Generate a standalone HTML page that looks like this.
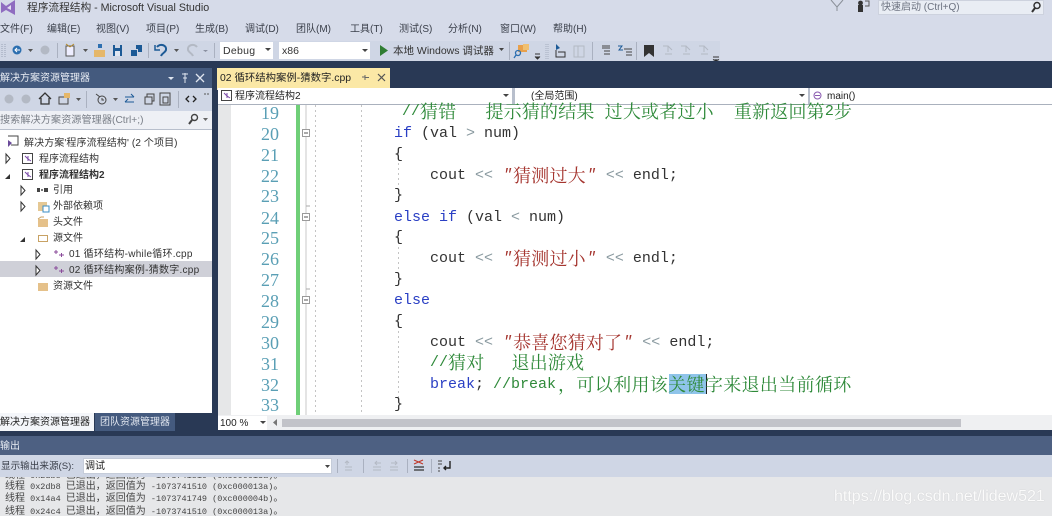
<!DOCTYPE html>
<html><head><meta charset="utf-8">
<style>
html,body{margin:0;padding:0}
body{width:1052px;height:516px;overflow:hidden;position:relative;background:#d6dbe9;font-family:"Liberation Sans","Noto Sans CJK SC",sans-serif;font-size:10px;color:#333;filter:blur(.3px)}
.a{position:absolute;white-space:pre}
.r{position:absolute}
.m{top:23px;line-height:14px;font-size:10px;color:#3a3f4a}
.t{line-height:14px;font-size:10px;color:#333}
.l{position:absolute;left:218px;width:61px;text-align:right;font:18px/20px "Liberation Serif","Liberation Mono",serif;color:#5a9fb5}
.k{position:absolute;white-space:pre;font:15px/20px "Liberation Mono",monospace;color:#333}
.c{font:18px/0 "Noto Serif CJK SC",serif;position:relative;top:3px;letter-spacing:.2px}
.g{color:#2f8a3a}.s{color:#a5352f}.b{color:#2a3fc4}.o{color:#8a9aa0}
.q{margin:0 1px;font-style:italic}
.out{position:absolute;left:5px;white-space:pre;font:8.5px/12px "Liberation Mono",monospace;color:#444}
.out span{font:10px/0 "Noto Sans CJK SC",sans-serif}
svg{position:absolute;overflow:visible}
</style></head><body>

<!-- title -->
<svg style="left:0;top:0" width="18" height="16"><path d="M1 2L6 6L15 0V15L6 10L1 13Z" fill="#8f6cc0"/><path d="M11 5V10L7 8Z" fill="#e3ddf0"/></svg>
<div class="a" style="left:27px;top:1px;font-size:10.7px;line-height:14px;color:#333">程序流程结构 - Microsoft Visual Studio</div>
<svg style="left:830px;top:0" width="16" height="12"><path d="M1 0L7 7V11M13 0L7 7" stroke="#8a8f98" fill="none"/></svg>
<svg style="left:857px;top:0" width="14" height="13"><rect x="1" y="5" width="5" height="7" fill="#333"/><circle cx="3.5" cy="3" r="2.4" fill="#333"/><path d="M8 1H12V6H8" stroke="#555" fill="none"/></svg>
<div class="r" style="left:878px;top:0;width:166px;height:15px;background:#e9edf4;border:1px solid #cdd2de;box-sizing:border-box"></div>
<div class="a" style="left:881px;top:1px;font-size:10px;line-height:14px;color:#6c7280">快速启动 (Ctrl+Q)</div>
<svg style="left:1030px;top:1px" width="12" height="12"><circle cx="7" cy="4.5" r="3" stroke="#333" stroke-width="1.5" fill="none"/><path d="M5 7L2 11" stroke="#333" stroke-width="2"/></svg>

<!-- menu -->
<div class="a m" style="left:0">文件(F)</div><div class="a m" style="left:47px">编辑(E)</div><div class="a m" style="left:96px">视图(V)</div><div class="a m" style="left:146px">项目(P)</div><div class="a m" style="left:195px">生成(B)</div><div class="a m" style="left:245px">调试(D)</div><div class="a m" style="left:296px">团队(M)</div><div class="a m" style="left:350px">工具(T)</div><div class="a m" style="left:399px">测试(S)</div><div class="a m" style="left:448px">分析(N)</div><div class="a m" style="left:500px">窗口(W)</div><div class="a m" style="left:553px">帮助(H)</div>

<!-- toolbar -->
<div class="r" style="left:0;top:41px;width:720px;height:20px;background:#cfd6e5"></div>
<svg style="left:0;top:41px" width="720" height="20">
<path d="M2 3V17M5 3V17" stroke="#9aa3b5" stroke-dasharray="1 1"/>
<circle cx="17" cy="9" r="4.500" fill="#2c6fb0"/><path d="M20 9H15M17 7L15 9L17 11" stroke="#fff" fill="none"/>
<path d="M28 8H33L30.500 11Z" fill="#555"/>
<circle cx="45" cy="9" r="4.500" fill="#b3b9c4"/>
<path d="M57.500 2V17" stroke="#aab1c0"/>
<rect x="66" y="5" width="8" height="10" fill="#eef" stroke="#555"/><path d="M66 3L70 6M74 3L70 6" stroke="#b58a2a"/>
<path d="M83 8H88L85.500 11Z" fill="#555"/>
<rect x="94" y="9" width="11" height="7" fill="#e5b769"/><rect x="98" y="3" width="4" height="4" fill="#2c6fb0"/>
<path d="M113 4H122V15H113Z" fill="#1c5a96"/><rect x="115" y="4" width="5" height="3" fill="#cfd6e5"/><rect x="115" y="10" width="5" height="5" fill="#dfe6f2"/>
<path d="M131 9H137V15H131ZM136 4H142V11H138V8H136Z" fill="#1c5a96"/>
<path d="M148.500 2V17" stroke="#aab1c0"/>
<path d="M157 6C160 2 167 4 166 9C165 12 162 12 161 15" stroke="#1c5a96" stroke-width="2" fill="none"/><path d="M155 4V9H160" stroke="#1c5a96" stroke-width="1.500" fill="none"/>
<path d="M174 8H179L176.500 11Z" fill="#555"/>
<path d="M197 6C194 2 187 4 188 9C189 12 192 12 193 15" stroke="#b3b9c4" stroke-width="2" fill="none"/>
<path d="M203 9H208L205.500 11Z" fill="#8a90a0"/>
<path d="M214.500 2V17" stroke="#aab1c0"/>
</svg>
<div class="r" style="left:220px;top:42px;width:53px;height:17px;background:#fff"></div>
<div class="a" style="left:223px;top:44px;font-size:10.500px;line-height:14px;letter-spacing:.3px">Debug</div>
<svg style="left:265px;top:48px" width="6" height="4"><path d="M0 0H6L3 3Z" fill="#444"/></svg>
<div class="r" style="left:279px;top:42px;width:91px;height:17px;background:#fff"></div>
<div class="a" style="left:282px;top:44px;font-size:10.500px;line-height:14px">x86</div>
<svg style="left:362px;top:49px" width="6" height="4"><path d="M0 0H6L3 3Z" fill="#444"/></svg>
<svg style="left:380px;top:45px" width="8" height="11"><path d="M0 0L8 5.500L0 11Z" fill="#2f7d32"/></svg>
<div class="a" style="left:393px;top:44px;font-size:10.500px;line-height:14px;color:#333">本地 Windows 调试器</div>
<svg style="left:370px;top:41px" width="360" height="20">
<path d="M129 7H134L131.500 10Z" fill="#444"/>
<path d="M139.500 1V19" stroke="#aab1c0"/>
<rect x="148" y="4" width="9" height="7" fill="#e8a04a"/><rect x="153" y="3" width="6" height="6" fill="#f0c070"/><circle cx="148" cy="12" r="2.500" fill="none" stroke="#2c6fb0" stroke-width="1.300"/><path d="M146 14L144 17" stroke="#2c6fb0" stroke-width="1.300"/>
<path d="M165 13H170M165 15.500L167.500 18L170 15.500" stroke="#333" fill="#333"/>
<path d="M176 3V19M178 3V19" stroke="#a5adbe" stroke-dasharray="1 1"/>
<path d="M186 3L190 7L186 9Z" fill="#1c5a96"/><path d="M186 9V16H195V11H188" stroke="#333" fill="none"/>
<path d="M204 5H214V16H204ZM208 5V16" stroke="#b3b9c4" fill="none"/>
<path d="M222.500 1V19" stroke="#aab1c0"/>
<path d="M232 7H240M234 10H240M234 13H240" stroke="#444"/><path d="M232 5H240" stroke="#444"/>
<path d="M248 5H252L249 9H253" stroke="#1c5a96" fill="none"/><path d="M254 8H262M256 11H262M256 14H262" stroke="#444"/>
<path d="M266.500 1V19" stroke="#aab1c0"/>
<path d="M274 4H284V16L279 12L274 16Z" fill="#333"/>
<path d="M293 5H298V11M298 5L302 9M295 13H302" stroke="#b3b9c4" fill="none"/>
<path d="M311 5H316V11M316 5L320 9M313 13H320" stroke="#b3b9c4" fill="none"/>
<path d="M329 5H334V11M334 5L338 9M331 13H338" stroke="#b3b9c4" fill="none"/>
<path d="M343 16H349M343 18.500L346 20L349 18.500" stroke="#333"/>
</svg>

<!-- navy frame -->
<div class="r" style="left:0;top:61px;width:1052px;height:375px;background:#293955"></div>

<!-- solution explorer -->
<div class="r" style="left:0;top:68px;width:212px;height:20px;background:#445a7e"></div>
<div class="a" style="left:0;top:71px;font-size:10px;line-height:15px;color:#e9edf4">解决方案资源管理器</div>
<svg style="left:166px;top:72px" width="42" height="12"><path d="M2 5H8L5 8Z" fill="#dfe5ef"/><path d="M19 1V6M16 2H22M17 6H21M19 6V11" stroke="#dfe5ef"/><path d="M30 2L38 10M38 2L30 10" stroke="#dfe5ef" stroke-width="1.300"/></svg>
<div class="r" style="left:0;top:88px;width:212px;height:23px;background:#cfd6e5"></div>
<svg style="left:0;top:88px" width="212" height="23">
<circle cx="9" cy="11" r="4.500" fill="#b3b9c4"/><circle cx="26" cy="11" r="4.500" fill="#b3b9c4"/>
<path d="M39 11L45 5L51 11M41 10V16H49V10" stroke="#333" fill="none" stroke-width="1.300"/>
<path d="M59 9H68V16H59Z" stroke="#444" fill="none"/><rect x="64" y="5" width="6" height="5" fill="#e5b769"/>
<path d="M76 10H81L78.500 13Z" fill="#555"/>
<path d="M86.500 3V20" stroke="#aab1c0"/>
<circle cx="102" cy="12" r="4" stroke="#444" fill="none"/><path d="M96 6L100 9M102 10V12H104" stroke="#444" fill="none"/>
<path d="M113 10H118L115.500 13Z" fill="#555"/>
<path d="M125 9H134M131 6L134 9M134 14H125M128 11L125 14" stroke="#1c5a96" fill="none"/>
<path d="M145 9H152V16H145ZM147 9V6H154V13H152" stroke="#444" fill="none"/>
<path d="M160 5H170V17H160ZM163 9H168V15H163Z" stroke="#444" fill="none"/>
<path d="M178.500 3V20" stroke="#aab1c0"/>
<path d="M189 8L186 11L189 14M193 8L196 11L193 14" stroke="#222" stroke-width="1.300" fill="none"/>
<path d="M205 5V7M208 5V7" stroke="#555"/>
</svg>
<div class="r" style="left:0;top:111px;width:212px;height:18px;background:#eef0f5"></div>
<div class="a" style="left:0;top:114px;font-size:10.200px;line-height:14px;color:#7a7f88">搜索解决方案资源管理器(Ctrl+;)</div>
<svg style="left:188px;top:113px" width="20" height="13"><circle cx="6.500" cy="4.500" r="3" stroke="#444" stroke-width="1.400" fill="none"/><path d="M4 7L1 11" stroke="#444" stroke-width="2"/><path d="M15 5H20L17.500 8Z" fill="#666"/></svg>
<div class="r" style="left:0;top:129px;width:212px;height:284px;background:#fff;border-top:1px solid #b8bfcc;box-sizing:border-box"></div>
<div class="r" style="left:0;top:261px;width:212px;height:16px;background:#cfd0d8"></div>

<svg style="left:0;top:131px" width="212" height="165">
<path d="M8 5H18V14H11" stroke="#444" fill="none"/><path d="M8 9V16L12 12Z" fill="#6a4a9a"/>
<path d="M6 23L10 27.500L6 32Z" stroke="#333" fill="#fff"/><path d="M5 48H10V43Z" fill="#333"/>
<rect x="22.500" y="22.500" width="10" height="10" fill="#fff" stroke="#444"/><path d="M25 25L28 28L31 30M28 25V30" stroke="#7a4aa8"/>
<rect x="22.500" y="38.500" width="10" height="10" fill="#fff" stroke="#444"/><path d="M25 41L28 44L31 46M28 41V46" stroke="#7a4aa8"/>
<path d="M21 55L25 59.500L21 64Z" stroke="#333" fill="#fff"/><rect x="37" y="57" width="3" height="4" fill="#444"/><rect x="41" y="58" width="2" height="2" fill="#777"/><rect x="44" y="57" width="4" height="4" fill="#444"/>
<path d="M21 71L25 75.500L21 80Z" stroke="#333" fill="#fff"/><rect x="38" y="71" width="9" height="9" fill="#e5c894"/><rect x="43" y="75" width="6" height="6" fill="#fff" stroke="#3a8dc4"/>
<rect x="38" y="88" width="10" height="8" fill="#e5c18a"/><path d="M38 88L41 86H44" stroke="#c8a264" fill="none"/>
<path d="M20 111H25V106Z" fill="#333"/><rect x="38.500" y="104.500" width="9" height="6" fill="#fff" stroke="#c8a264"/>
<path d="M36 119L40 123.500L36 128Z" stroke="#333" fill="#fff"/><path d="M54 121H58M56 119V123M59 124H64M61.500 122V126" stroke="#8a4a9a"/>
<path d="M36 135L40 139.500L36 144Z" stroke="#333" fill="#fff"/><path d="M54 137H58M56 135V139M59 140H64M61.500 138V142" stroke="#8a4a9a"/>
<rect x="38" y="152" width="10" height="8" fill="#e5c18a"/>
</svg>
<div class="a t" style="left:24px;top:137px;letter-spacing:.1px">解决方案'程序流程结构' (2 个项目)</div>
<div class="a t" style="left:39px;top:153px">程序流程结构</div>
<div class="a t" style="left:39px;top:169px;font-weight:bold">程序流程结构2</div>
<div class="a t" style="left:53px;top:184px">引用</div>
<div class="a t" style="left:53px;top:200px">外部依赖项</div>
<div class="a t" style="left:53px;top:216px">头文件</div>
<div class="a t" style="left:53px;top:232px">源文件</div>
<div class="a t" style="left:69px;top:248px;letter-spacing:.25px">01 循环结构-while循环.cpp</div>
<div class="a t" style="left:69px;top:264px;letter-spacing:.25px">02 循环结构案例-猜数字.cpp</div>
<div class="a t" style="left:53px;top:280px">资源文件</div>

<div class="r" style="left:0;top:413px;width:94px;height:18px;background:#f4f6fa"></div>
<div class="a" style="left:0;top:415px;font-size:10px;line-height:15px;color:#222">解决方案资源管理器</div>
<div class="r" style="left:95px;top:413px;width:80px;height:18px;background:#445a7e"></div>
<div class="a" style="left:100px;top:415px;font-size:10px;line-height:15px;color:#dfe5ef">团队资源管理器</div>

<!-- tab -->
<div class="r" style="left:217px;top:68px;width:173px;height:20px;background:#fbe8a6"></div>
<div class="a" style="left:220px;top:71px;font-size:10.400px;line-height:15px;color:#222">02 循环结构案例-猜数字.cpp</div>
<svg style="left:360px;top:72px" width="26" height="12"><path d="M2 5H5M5 3V8M5 5.500H9" stroke="#666"/><path d="M18 2L25 9M25 2L18 9" stroke="#555" stroke-width="1.200"/></svg>
<div class="r" style="left:217px;top:88px;width:835px;height:2px;background:#f5edc0"></div>

<!-- nav bar -->
<div class="r" style="left:218px;top:88px;width:834px;height:16px;background:#fff;border-bottom:1px solid #aab1bd"></div>
<div class="r" style="left:512px;top:88px;width:3px;height:16px;background:#b8bfcc"></div>
<div class="r" style="left:808px;top:88px;width:2px;height:16px;background:#b8bfcc"></div>
<svg style="left:221px;top:90px" width="11" height="11"><rect x=".5" y=".5" width="10" height="10" fill="#fff" stroke="#444"/><path d="M3 3L6 6L9 8M6 3V8" stroke="#7a4aa8"/></svg>
<div class="a" style="left:235px;top:89px;font-size:10px;line-height:15px;color:#222">程序流程结构2</div>
<div class="a" style="left:531px;top:89px;font-size:10px;line-height:15px;color:#222">(全局范围)</div>
<div class="a" style="left:827px;top:89px;font-size:10px;line-height:15px;color:#222">main()</div>
<svg style="left:503px;top:94px" width="6" height="4"><path d="M0 0H6L3 3Z" fill="#444"/></svg>
<svg style="left:799px;top:94px" width="6" height="4"><path d="M0 0H6L3 3Z" fill="#444"/></svg>
<svg style="left:813px;top:91px" width="9" height="9"><circle cx="4.500" cy="4.500" r="3.500" fill="none" stroke="#8a5ab0"/><path d="M2 4.500H7" stroke="#8a5ab0"/></svg>

<!-- editor -->
<div class="r" style="left:218px;top:105px;width:834px;height:310px;background:#fff;overflow:hidden"></div>
<div class="r" style="left:218px;top:105px;width:13px;height:310px;background:#e6e7e8"></div>
<div class="r" style="left:296px;top:105px;width:4px;height:310px;background:#6fcf78"></div>
<svg style="left:300px;top:105px" width="120" height="310">
<path d="M6 0V310" stroke="#c8c8c8"/>
<path d="M15.500 0V310M61.500 0V310M98.500 48V82M98.500 132V166M98.500 216V296" stroke="#c4c4c4" stroke-dasharray="2 3"/>
<rect x="2.500" y="24.500" width="7" height="7" fill="#fff" stroke="#9a9a9a"/><path d="M4 28H8" stroke="#555"/>
<rect x="2.500" y="108.500" width="7" height="7" fill="#fff" stroke="#9a9a9a"/><path d="M4 112H8" stroke="#555"/>
<rect x="2.500" y="191.500" width="7" height="7" fill="#fff" stroke="#9a9a9a"/><path d="M4 195H8" stroke="#555"/>
<path d="M6 101H10M6 184H10" stroke="#aaa"/>
</svg>

<div class="l" style="top:103px">19</div><div class="l" style="top:124px">20</div><div class="l" style="top:145px">21</div><div class="l" style="top:166px">22</div><div class="l" style="top:186px">23</div><div class="l" style="top:208px">24</div><div class="l" style="top:228px">25</div><div class="l" style="top:249px">26</div><div class="l" style="top:270px">27</div><div class="l" style="top:291px">28</div><div class="l" style="top:312px">29</div><div class="l" style="top:333px">30</div><div class="l" style="top:354px">31</div><div class="l" style="top:375px">32</div><div class="l" style="top:395px">33</div>

<div class="k g" style="left:402px;top:102px">//<span class="c">猜错</span>   <span class="c" style="margin-left:2px">提示猜的结果</span> <span class="c" style="margin-left:1px">过大或者过小</span>  <span class="c" style="margin-left:2px">重新返回第</span>2<span class="c">步</span></div>
<div class="k" style="left:394px;top:124px"><span class="b">if</span> (val <span class="o">&gt;</span> num)</div>
<div class="k" style="left:394px;top:145px">{</div>
<div class="k" style="left:430px;top:166px">cout <span class="o">&lt;&lt;</span> <span class="s"><span class="q">"</span><span class="c">猜测过大</span><span class="q">"</span></span> <span class="o">&lt;&lt;</span> endl;</div>
<div class="k" style="left:394px;top:186px">}</div>
<div class="k" style="left:394px;top:208px"><span class="b">else if</span> (val <span class="o">&lt;</span> num)</div>
<div class="k" style="left:394px;top:228px">{</div>
<div class="k" style="left:430px;top:249px">cout <span class="o">&lt;&lt;</span> <span class="s"><span class="q">"</span><span class="c">猜测过小</span><span class="q">"</span></span> <span class="o">&lt;&lt;</span> endl;</div>
<div class="k" style="left:394px;top:270px">}</div>
<div class="k" style="left:394px;top:291px"><span class="b">else</span></div>
<div class="k" style="left:394px;top:312px">{</div>
<div class="k" style="left:430px;top:333px">cout <span class="o">&lt;&lt;</span> <span class="s"><span class="q">"</span><span class="c">恭喜您猜对了</span><span class="q">"</span></span> <span class="o">&lt;&lt;</span> endl;</div>
<div class="k g" style="left:430px;top:353px">//<span class="c">猜对</span>   <span class="c">退出游戏</span></div>
<div class="r" style="left:669px;top:374px;width:37px;height:20px;background:#8fc4ea"></div>
<div class="r" style="left:706px;top:374px;width:1px;height:20px;background:#222"></div>
<div class="k" style="left:430px;top:375px"><span class="b">break</span>; <span class="g">//break<span class="c" style="margin-left:2px;letter-spacing:.35px">，可以利用该关键字来退出当前循环</span></span></div>
<div class="k" style="left:394px;top:395px">}</div>

<!-- scrollbar -->
<div class="r" style="left:218px;top:415px;width:834px;height:15px;background:#eff0f2"></div>
<div class="r" style="left:218px;top:416px;width:49px;height:14px;background:#fff"></div>
<div class="a" style="left:220px;top:417px;font-size:10px;line-height:14px;color:#222">100 %</div>
<svg style="left:260px;top:421px" width="6" height="4"><path d="M0 0H6L3 3Z" fill="#444"/></svg>
<svg style="left:273px;top:419px" width="5" height="7"><path d="M4 0V7L0 3.500Z" fill="#777"/></svg>
<div class="r" style="left:282px;top:419px;width:679px;height:8px;background:#c2c3c9"></div>

<!-- output -->
<div class="r" style="left:0;top:436px;width:1052px;height:19px;background:#4d6082"></div>
<div class="a" style="left:0;top:440px;font-size:10px;line-height:14px;color:#e9edf4">输出</div>
<div class="r" style="left:0;top:455px;width:1052px;height:22px;background:#cfd6e5"></div>
<div class="a" style="left:1px;top:460px;font-size:9.600px;line-height:14px;color:#3a3f4a">显示输出来源(S):</div>
<div class="r" style="left:83px;top:458px;width:249px;height:16px;background:#fff;box-sizing:border-box;border:1px solid #c5ccd9"></div>
<div class="a" style="left:85px;top:460px;font-size:10px;line-height:14px;color:#222">调试</div>
<svg style="left:325px;top:465px" width="5" height="3"><path d="M0 0H5L2.500 3Z" fill="#444"/></svg>
<svg style="left:336px;top:457px" width="120" height="18">
<path d="M1.500 2V16M27.500 2V16M71.500 2V16M95.500 2V16" stroke="#aab1c0"/>
<path d="M11 4V8M9 6L11 4L13 6M9 10H16M9 13H16" stroke="#b3b9c4" fill="none"/>
<path d="M39 6H45M41 4L39 6L41 8M37 10H45M37 13H45" stroke="#b3b9c4" fill="none"/>
<path d="M55 6H61M59 4L61 6L59 8M54 10H62M54 13H62" stroke="#b3b9c4" fill="none"/>
<path d="M78 3L87 7M87 3L78 7" stroke="#c0392b" stroke-width="1.200"/><path d="M78 10H88M78 13H88" stroke="#333" stroke-width="1.300"/>
<path d="M102 4H106M102 7H106M102 11H104M102 14H104" stroke="#444"/><path d="M114 4V11H108M110 9L108 11L110 13" stroke="#222" stroke-width="1.400" fill="none"/>
</svg>
<div class="r" style="left:0;top:477px;width:1052px;height:39px;background:#e6e7e9;overflow:hidden">
<div class="out" style="top:-7px"><span>线程</span> 0x2db8 <span>已退出，返回值为</span> -1073741510 (0xc000013a)<span>。</span></div>
<div class="out" style="top:4px"><span>线程</span> 0x2db8 <span>已退出，返回值为</span> -1073741510 (0xc000013a)<span>。</span></div>
<div class="out" style="top:16px"><span>线程</span> 0x14a4 <span>已退出，返回值为</span> -1073741749 (0xc000004b)<span>。</span></div>
<div class="out" style="top:29px"><span>线程</span> 0x24c4 <span>已退出，返回值为</span> -1073741510 (0xc000013a)<span>。</span></div>
</div>
<div class="a" style="left:834px;top:487px;font-size:16px;line-height:20px;color:#fff;opacity:.85;text-shadow:0 0 1px #bbb">https://blog.csdn.net/lidew521</div>

</body></html>
